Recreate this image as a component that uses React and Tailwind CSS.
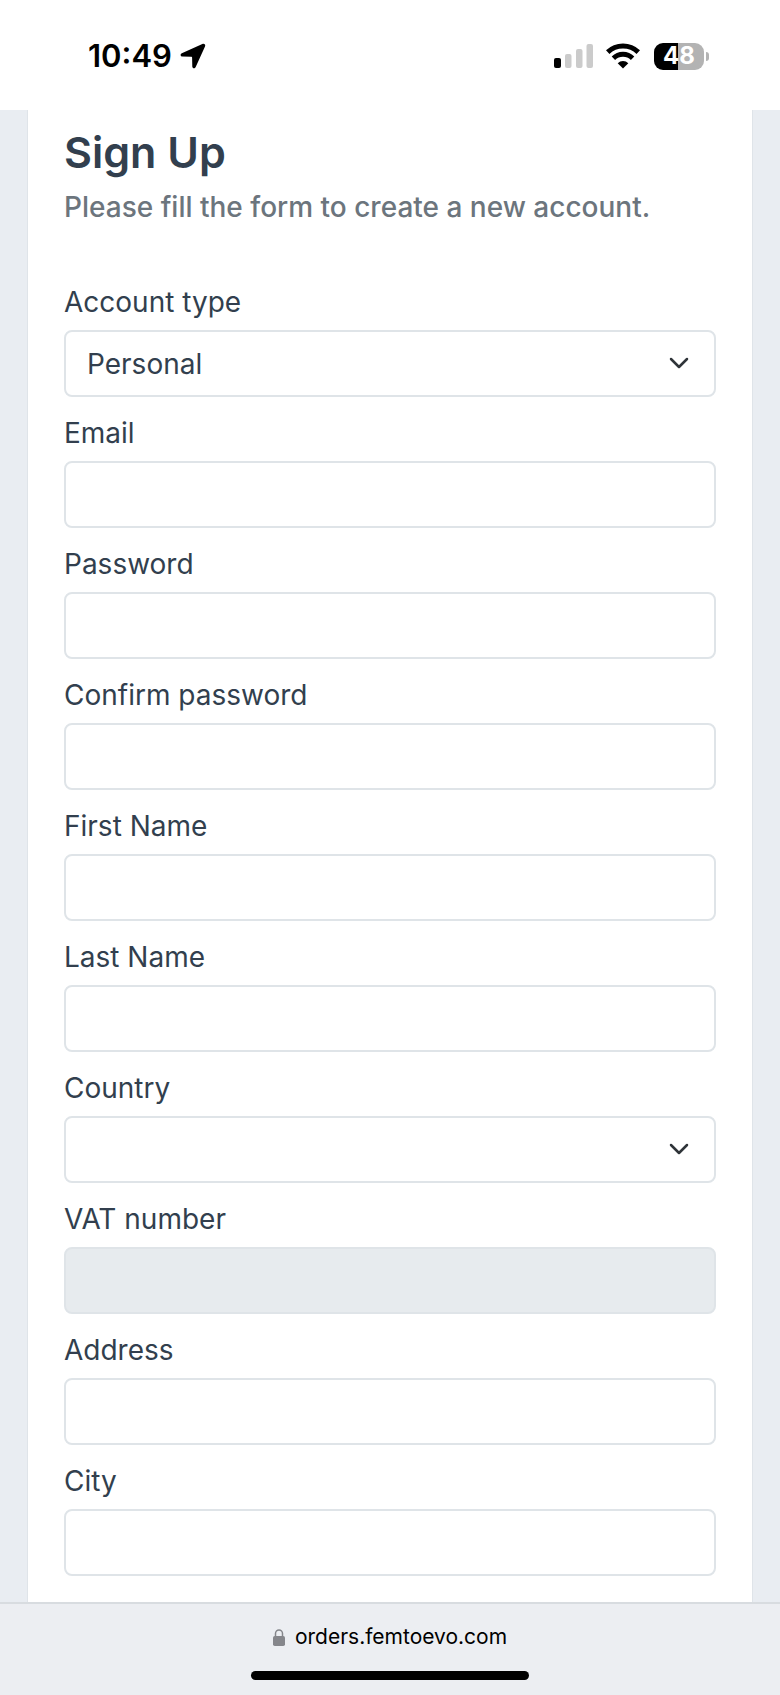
import { useState } from 'react'

const FIELDS = [
  { id: 'accountType', label: 'Account type', kind: 'select', options: ['Personal', 'Company'] },
  { id: 'email', label: 'Email', kind: 'email' },
  { id: 'password', label: 'Password', kind: 'password' },
  { id: 'confirmPassword', label: 'Confirm password', kind: 'password' },
  { id: 'firstName', label: 'First Name', kind: 'text' },
  { id: 'lastName', label: 'Last Name', kind: 'text' },
  { id: 'country', label: 'Country', kind: 'select', options: [''] },
  { id: 'vat', label: 'VAT number', kind: 'text', disabled: true },
  { id: 'address', label: 'Address', kind: 'text' },
  { id: 'city', label: 'City', kind: 'text' },
]

const CONTROL =
  'block h-[67px] w-full appearance-none rounded-lg border-2 border-[#dfe4e8] bg-white px-[21px] text-[28px] text-[#323f4e] outline-none focus:border-[#90b5e2] disabled:bg-[#e7ebee]'

function StatusBar() {
  return (
    <header className="flex h-[110px] items-start justify-between bg-white pt-9 pr-[71px] pl-[88px] text-black">
      <div className="flex h-10 items-center gap-2">
        <span className="text-[31px] leading-10 font-semibold">10:49</span>
        <svg className="h-[26px] w-[26px]" viewBox="0 0 26 26" fill="currentColor" aria-hidden="true">
          <path d="M22.400 1 1.800 10.200c-1.900.9-1.500 3.200.6 3.300l8.700.2c.7 0 1 .3 1 1l.2 8.700c.1 2.100 2.500 2.500 3.400.6L25 3.500c.8-1.800-.8-3.300-2.600-2.500z" />
        </svg>
      </div>

      <div className="flex h-10 items-center">
        <svg className="mr-3 h-[26px] w-10" viewBox="0 0 40 26" aria-hidden="true">
          <rect x="0" y="15" width="7" height="10" rx="2" fill="#000" />
          <rect x="11" y="11" width="6.500" height="14" rx="2" fill="#cbcbcb" />
          <rect x="22" y="6" width="6.500" height="19" rx="2" fill="#cbcbcb" />
          <rect x="32.500" y="1" width="6.500" height="24" rx="2" fill="#cbcbcb" />
        </svg>
        <svg className="mr-[14px] h-[26px] w-[34px]" viewBox="0 0 34 26" fill="none" stroke="#000" aria-hidden="true">
          <path d="M1.700 9.100a22 22 0 0 1 30.600 0" strokeWidth="5" />
          <path d="M7.400 15.200a13.600 13.600 0 0 1 19.200 0" strokeWidth="4.800" />
          <path d="M17 25.500l-5.300-5.300a7.500 7.500 0 0 1 10.600 0z" fill="#000" stroke="none" />
        </svg>
        <div className="flex items-center gap-[2px]">
          <div className="flex h-[27px] w-[50px] items-center justify-center rounded-[9px] bg-linear-to-r from-black from-49% to-[#b3b3b3] to-49% text-2xl font-bold text-white">
            48
          </div>
          <div className="h-[9px] w-[3px] rounded-r-full bg-[#b3b3b3]" />
        </div>
      </div>
    </header>
  )
}

function Field({ field, value, onChange }) {
  const { id, label, kind, options, disabled } = field

  return (
    <div>
      <label htmlFor={id} className="mb-[7px] block text-[28px] leading-[42px]">
        {label}
      </label>
      {kind === 'select' ? (
        <div className="relative">
          <select id={id} value={value} onChange={onChange} className={CONTROL}>
            {options.map((option) => (
              <option key={option} value={option}>{option}</option>
            ))}
          </select>
          <svg
            className="pointer-events-none absolute top-[27px] right-[27px] h-3 w-5"
            viewBox="0 0 20 12"
            fill="none"
            stroke="#2f3439"
            strokeWidth="2.500"
            strokeLinecap="round"
            strokeLinejoin="round"
            aria-hidden="true"
          >
            <path d="M2 2l8 8 8-8" />
          </svg>
        </div>
      ) : (
        <input id={id} type={kind} value={value} onChange={onChange} disabled={disabled} className={CONTROL} />
      )}
    </div>
  )
}

function AddressBar() {
  return (
    <footer className="flex flex-1 flex-col items-center border-t-2 border-[#d8dce0] bg-[#eceef2] pt-[17px] text-black">
      <a href="#" className="flex items-center gap-[10px] text-[21px] leading-8">
        <svg className="h-[17px] w-3" viewBox="0 0 12 17" aria-hidden="true">
          <path d="M2.500 8V4.500a3.500 3.500 0 0 1 7 0V8" fill="none" stroke="#85868b" strokeWidth="1.500" />
          <rect x="0" y="7" width="12" height="10" rx="1.800" fill="#85868b" />
        </svg>
        orders.femtoevo.com
      </a>
      <div className="mt-[18px] h-[9px] w-[278px] rounded-full bg-black" />
    </footer>
  )
}

export default function App() {
  const [values, setValues] = useState({ accountType: 'Personal' })

  return (
    <div className="flex min-h-screen flex-col bg-[#e9edf2] font-['Inter',sans-serif] text-[#323f4e]">
      <StatusBar />

      <main className="mx-[27px] border-x border-[#dfe4e9] bg-white px-9 pt-4 pb-[26px]">
        <h1 className="text-[43px] leading-[52px] font-semibold">Sign Up</h1>
        <p className="mt-2 text-[28px] leading-[42px] font-medium text-[#6c757d]">
          Please fill the form to create a new account.
        </p>

        <form className="mt-[53px] flex flex-col gap-[15px]">
          {FIELDS.map((field) => (
            <Field
              key={field.id}
              field={field}
              value={values[field.id] ?? ''}
              onChange={(e) => setValues({ ...values, [field.id]: e.target.value })}
            />
          ))}
        </form>
      </main>

      <AddressBar />
    </div>
  )
}
